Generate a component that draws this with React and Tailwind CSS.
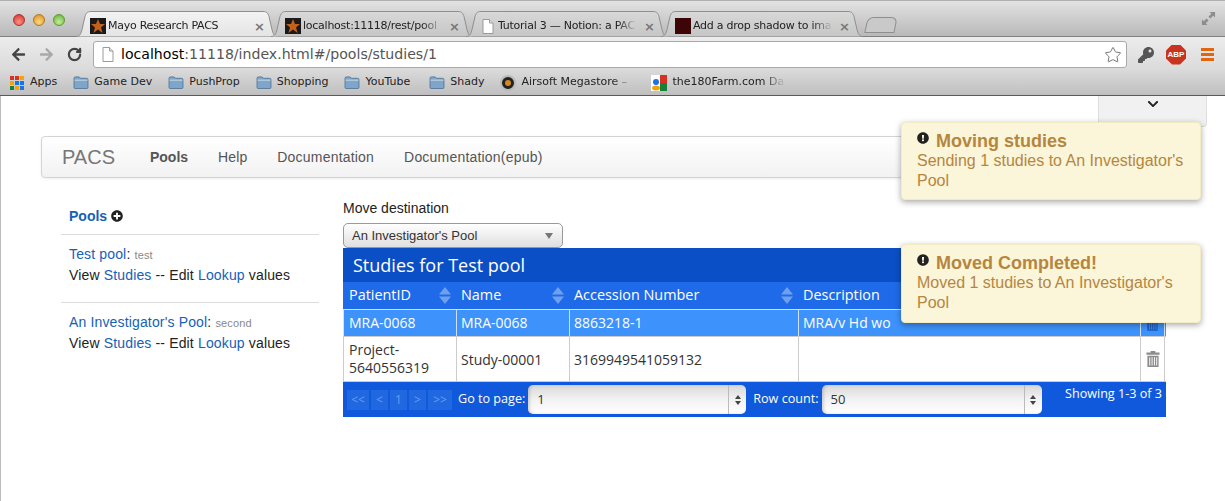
import React from 'react'
import { FaArrowLeft, FaArrowRight, FaKey, FaChevronDown, FaExclamationCircle, FaPlusCircle } from 'react-icons/fa'
import { Star, RotateCw } from 'lucide-react'

const uiFont = "font-['DejaVu_Sans',sans-serif]"

function FileIcon({ className }) {
  return (
    <svg viewBox="0 0 12 15" className={className}>
      <path d="M1 .5h6.5L11 4v10.5H1z" fill="#fff" stroke="#9a9a9a" />
      <path d="M7.5.5V4H11" fill="#e4e4e4" stroke="#9a9a9a" />
    </svg>
  )
}

function StarFavicon() {
  return (
    <svg viewBox="0 0 16 16" className="w-4 h-4 shrink-0">
      <rect width="16" height="16" fill="#1a1a1a" />
      <path d="M8 1l2 5h5l-4 3.4L12.6 15 8 11.6 3.4 15 5 9.4 1 6h5z" fill="#c4601a" />
    </svg>
  )
}

function Tab({ active, icon, title, width }) {
  return (
    <div className="relative h-[26px] -mr-[7px]" style={{ width }}>
      <svg className="absolute inset-0 w-full h-full" viewBox={`0 0 ${width} 26`} fill="none">
        <defs>
          <linearGradient id="activeTab" x1="0" y1="0" x2="0" y2="1">
            <stop offset="0" stopColor="#f3f3f3" />
            <stop offset="1" stopColor="#e4e4e4" />
          </linearGradient>
          <linearGradient id="idleTab" x1="0" y1="0" x2="0" y2="1">
            <stop offset="0" stopColor="#d8d8d8" />
            <stop offset="1" stopColor="#c6c6c6" />
          </linearGradient>
        </defs>
        <path
          d={`M0 25.5c4 0 5-3 6-7l3-13c1-3 2-5 6-5h${width - 30}c4 0 5 2 6 5l3 13c1 4 2 7 6 7`}
          fill={active ? 'url(#activeTab)' : 'url(#idleTab)'}
          stroke="#8e8e8e"
        />
      </svg>
      <div className="relative flex items-center h-full pl-[14px] pr-[13px] pt-[4px] gap-[2px]">
        {icon}
        <span className="flex-1 overflow-hidden whitespace-nowrap text-[11px] tracking-[-0.25px] text-[#222] [mask-image:linear-gradient(to_right,black_85%,transparent)]">
          {title}
        </span>
        <span className="text-[13px] text-[#777] font-bold leading-none ml-[4px]">×</span>
      </div>
    </div>
  )
}

function Folder() {
  return (
    <svg viewBox="0 0 16 14" className="w-4 h-[13px] shrink-0">
      <path d="M.5 2.5c0-1 .5-1.500 1.500-1.500h4l1.500 1.500H14c1 0 1.500.5 1.500 1.500v8.500c0 .5-.5 1-1 1h-13c-.5 0-1-.5-1-1z" fill="#7fa6c9" stroke="#56789a" />
      <path d="M1 4.500h14" stroke="#c8dcec" />
    </svg>
  )
}

function Bookmark({ label, className }) {
  return (
    <div className={`flex items-center gap-[5px] ${className || ''}`}>
      <Folder />
      <span>{label}</span>
    </div>
  )
}

function BrowserChrome() {
  return (
    <div className={`${uiFont} select-none`}>
      {/* tab strip */}
      <div className="relative h-[37px] flex items-end pl-[76px] bg-gradient-to-b from-[#e2e2e2] to-[#b9b9b9] border-t border-[#b0b0b0] border-b border-b-[#808080]">
        <div className="absolute left-[13px] top-[13px] flex gap-[8px]">
          <span className="w-3 h-3 rounded-full bg-[radial-gradient(circle_at_50%_70%,#ff8f80,#d0302c)] border border-[#a33]" />
          <span className="w-3 h-3 rounded-full bg-[radial-gradient(circle_at_50%_70%,#ffd980,#d98a1c)] border border-[#b07a20]" />
          <span className="w-3 h-3 rounded-full bg-[radial-gradient(circle_at_50%_70%,#c4ef90,#5fae3a)] border border-[#5a9a35]" />
        </div>
        <div className="flex items-end -mb-px">
          <Tab active width={202} icon={<StarFavicon />} title="Mayo Research PACS" />
          <Tab width={202} icon={<StarFavicon />} title="localhost:11118/rest/pool" />
          <Tab width={202} icon={<FileIcon className="w-4 h-[15px] shrink-0" />} title="Tutorial 3 — Notion: a PAC" />
          <Tab width={202} icon={<span className="w-4 h-4 shrink-0 bg-[#3d0505]" />} title="Add a drop shadow to ima" />
          <div className="w-[30px] h-[16px] ml-[10px] mb-[4px] rounded-t-md border border-[#8e8e8e] bg-[#c9c9c9] -skew-x-12" />
        </div>
        <svg viewBox="0 0 16 16" className="absolute right-[9px] top-[10px] w-[15px] h-[15px]" fill="#8d8d8d">
          <path d="M9 1h6v6l-2-2-3 3-2-2 3-3zM7 15H1V9l2 2 3-3 2 2-3 3z" />
        </svg>
      </div>

      {/* toolbar */}
      <div className="h-[31px] flex items-center pt-[4px] bg-gradient-to-b from-[#ececec] to-[#dcdcdc]">
        <div className="flex items-center w-[93px] pl-[11px] gap-[13px]">
          <FaArrowLeft className="w-[15px] h-[15px] text-[#444]" />
          <FaArrowRight className="w-[15px] h-[15px] text-[#a9a9a9]" />
          <RotateCw className="w-[15px] h-[15px] text-[#444]" strokeWidth={3.5} />
        </div>
        <div className="w-[1034px] h-[27px] flex items-center bg-white border border-[#aaa] rounded-[3px] pl-[8px] pr-[4px]">
          <FileIcon className="w-[12px] h-[15px] shrink-0" />
          <span className="ml-[7px] flex-1 text-[14.1px] text-[#555] whitespace-nowrap">
            <span className="text-black">localhost</span>:11118/index.html#/pools/studies/1
          </span>
          <Star className="w-[18px] h-[18px] text-[#666]" strokeWidth={1.2} />
        </div>
        <FaKey className="ml-[11px] w-[16px] h-[16px] text-[#555]" />
        <span className="ml-[12px] w-[20px] h-[20px] [clip-path:polygon(30%_0,70%_0,100%_30%,100%_70%,70%_100%,30%_100%,0_70%,0_30%)] bg-[#c8341e] text-white text-[8px] font-bold flex items-center justify-center font-['Liberation_Sans',sans-serif]">ABP</span>
        <div className="ml-[15px] w-[13px] flex flex-col gap-[2px]">
          <span className="h-[3px] bg-[#e2660f]" />
          <span className="h-[3px] bg-[#e2660f]" />
          <span className="h-[3px] bg-[#e2660f]" />
        </div>
      </div>

      {/* bookmarks */}
      <div className="h-[25px] flex items-center pl-[10px] pt-[2px] gap-[16px] text-[11px] text-[#222] whitespace-nowrap bg-gradient-to-b from-[#dcdcdc] to-[#bfbfbf] border-b border-[#5a5a5a] box-content">
        <div className="flex items-center gap-[6px]">
          <div className="grid grid-cols-3 gap-px w-[14px]">
            {['#d93025', '#d93025', '#f4a30b', '#f4a30b', '#1a73e8', '#1a73e8', '#188038', '#f4a30b', '#1a73e8'].map((c, i) => (
              <span key={i} className="w-[4px] h-[4px]" style={{ background: c }} />
            ))}
          </div>
          <span>Apps</span>
        </div>
        <Bookmark label="Game Dev" />
        <Bookmark label="PushProp" />
        <Bookmark label="Shopping" />
        <Bookmark label="YouTube" />
        <Bookmark label="Shady" className="ml-[3px]" />
        <div className="flex items-center gap-[5px]">
          <span className="w-4 h-4 rounded-full bg-[#222] border-2 border-[#bbb] flex items-center justify-center">
            <span className="w-[6px] h-[6px] rounded-full bg-[#d08a20]" />
          </span>
          <span className="w-[114px] overflow-hidden [mask-image:linear-gradient(to_right,black_80%,transparent)]">Airsoft Megastore –</span>
        </div>
        <div className="flex items-center gap-[5px]">
          <svg viewBox="0 0 16 16" className="w-4 h-4 shrink-0">
            <rect width="16" height="16" fill="#fff" />
            <path d="M9 0h7v8H9z" fill="#d93025" />
            <path d="M9 8h7v8H9z" fill="#188038" />
            <circle cx="5" cy="7" r="3" fill="#1a73e8" />
            <ellipse cx="5" cy="13" rx="4" ry="2.500" fill="#f4a30b" />
          </svg>
          <span className="w-[114px] overflow-hidden [mask-image:linear-gradient(to_right,black_80%,transparent)]">the180Farm.com Da</span>
        </div>
      </div>
    </div>
  )
}

function Navbar() {
  return (
    <div className="h-[42px] mx-[41px] flex items-center pl-[20px] rounded-[4px] border border-[#d4d4d4] bg-gradient-to-b from-white to-[#f2f2f2] shadow-[0_1px_3px_rgba(0,0,0,0.07)] text-[14px] text-[#555]">
      <span className="text-[20px] text-[#777] mr-[35px]">PACS</span>
      <span className="font-bold mr-[30px]">Pools</span>
      <span className="mr-[30px] tracking-[0.1px]">Help</span>
      <span className="mr-[30px] tracking-[0.2px]">Documentation</span>
      <span className="tracking-[0.2px]">Documentation(epub)</span>
    </div>
  )
}

function PoolItem({ name, note }) {
  return (
    <div className="border-t border-[#ddd] pl-[8px] pt-[9px] h-[68px] text-[14px] leading-[20px] text-[#222] tracking-[0.15px]">
      <div>
        <span className="text-[#1561b8]">{name}</span>: <span className="text-[11px] text-[#888]">{note}</span>
      </div>
      <div>
        View <span className="text-[#1561b8]">Studies</span> -- Edit <span className="text-[#1561b8]">Lookup</span> values
      </div>
    </div>
  )
}

function Sidebar() {
  return (
    <div className="w-[258px] shrink-0 ml-[61px]">
      <div className="flex items-center gap-[4px] h-[36px] pl-[8px] text-[14px] font-bold text-[#1561b8]">
        Pools <FaPlusCircle className="w-[12px] h-[12px] text-[#222]" />
      </div>
      <PoolItem name="Test pool" note="test" />
      <PoolItem name="An Investigator's Pool" note="second" />
    </div>
  )
}

function SortArrows() {
  return (
    <svg viewBox="0 0 12 17" className="w-[12px] h-[17px] shrink-0" fill="#6fa0ee">
      <path d="M6 0l6 7.500H0zM6 17L0 9.500h12z" />
    </svg>
  )
}

function Trash({ className }) {
  return (
    <svg viewBox="0 0 15 17" className={className} fill="currentColor">
      <path d="M5 0h5v1.500h4.500V4H.5V1.500H5z" />
      <path d="M1.500 5h12v12h-12zM3.500 6.500v9h1v-9zm2.500 0v9h1v-9zm2.500 0v9h1v-9zm2.500 0v9h1v-9z" fillRule="evenodd" />
    </svg>
  )
}

const colClass = 'grid grid-cols-[113px_113px_229px_342px_25px]'

function HeadCell({ label, className }) {
  return (
    <div className={`flex items-center justify-between pb-[1px] pr-[5px] text-[14.4px] ${className}`}>
      <span>{label}</span>
      <SortArrows />
    </div>
  )
}

function PagerButton({ label, w }) {
  return <span className={`${w} h-[20px] flex items-center justify-center bg-[#2068e0] text-[#6a9cf0] text-[12px]`}>{label}</span>
}

function FooterSelect({ value, width }) {
  return (
    <div className={`${width} h-[29px] flex items-center rounded-[5px] bg-gradient-to-b from-[#d9d9d9] via-[#f2f2f2] to-white text-[#333] text-[13px] shadow-[inset_2px_0_3px_rgba(0,0,0,0.15)]`}>
      <span className="flex-1 pl-[9px]">{value}</span>
      <span className="w-[18px] h-full border-l border-[#bbb] flex flex-col items-center justify-center gap-[2px]">
        <span className="border-x-[3px] border-x-transparent border-b-[4px] border-b-[#444]" />
        <span className="border-x-[3px] border-x-transparent border-t-[4px] border-t-[#444]" />
      </span>
    </div>
  )
}

function StudiesTable() {
  return (
    <div className="w-[823px] font-['Open_Sans',sans-serif] text-[14px]">
      <div className="h-[34px] flex items-center pl-[10px] bg-[#0b4fc6] text-white text-[18px]">Studies for Test pool</div>
      <div className={`${colClass} h-[27px] bg-[#1f6ae8] text-white`}>
        <HeadCell label="PatientID" className="pl-[6px]" />
        <HeadCell label="Name" className="pl-[5px]" />
        <HeadCell label="Accession Number" className="pl-[5px]" />
        <HeadCell label="Description" className="pl-[5px]" />
        <div />
      </div>
      <div className={`${colClass} h-[27px] bg-[#3d92fb] text-white border-t border-[#cfe2fb]`}>
        <div className="flex items-center pb-[1px] pl-[5px] border-l border-[#cfe2fb]">MRA-0068</div>
        <div className="flex items-center pb-[1px] pl-[4px] border-l border-[#cfe2fb]">MRA-0068</div>
        <div className="flex items-center pb-[1px] pl-[4px] border-l border-[#cfe2fb]">8863218-1</div>
        <div className="flex items-center pb-[1px] pl-[4px] border-l border-[#cfe2fb]">MRA/v Hd wo</div>
        <div className="flex items-center justify-center border-l border-r border-[#cfe2fb]">
          <Trash className="w-[13px] h-[15px] text-[#1c5cc0]" />
        </div>
      </div>
      <div className={`${colClass} h-[46px] text-[#333] leading-[18px] border-y border-[#ccc]`}>
        <div className="flex items-center pl-[5px] border-l border-[#ccc]">Project-<br />5640556319</div>
        <div className="flex items-center pl-[4px] pt-[1px] border-l border-[#ccc]">Study-00001</div>
        <div className="flex items-center pl-[4px] pt-[1px] border-l border-[#ccc]">3169949541059132</div>
        <div className="border-l border-[#ccc]" />
        <div className="flex items-center justify-center border-l border-r border-[#ccc]">
          <Trash className="w-[14px] h-[16px] text-[#8c8c8c]" />
        </div>
      </div>
      <div className="h-[35px] flex items-center pl-[4px] bg-[#1059dc] text-white text-[12.6px]">
        <div className="flex gap-[2px] mr-[6px]">
          <PagerButton label="<<" w="w-[22px]" />
          <PagerButton label="<" w="w-[17px]" />
          <PagerButton label="1" w="w-[17px]" />
          <PagerButton label=">" w="w-[17px]" />
          <PagerButton label=">>" w="w-[24px]" />
        </div>
        <span className="mr-[3px]">Go to page:</span>
        <FooterSelect value="1" width="w-[218px]" />
        <span className="ml-[7px] mr-[3px]">Row count:</span>
        <FooterSelect value="50" width="w-[220px]" />
        <span className="ml-auto mr-[4px] self-start mt-[3px]">Showing 1-3 of 3</span>
      </div>
    </div>
  )
}

function Toast({ title, text, className }) {
  return (
    <div className={`absolute left-[901px] w-[300px] rounded-[4px] bg-[#fbf5d9] border border-[#f3ebc4] shadow-[0_2px_6px_rgba(0,0,0,0.35)] pl-[15px] pr-[15px] pt-[8px] text-[#b5863f] text-[16px] leading-[20px] ${className}`}>
      <div className="flex items-center gap-[7px] text-[18px] font-bold leading-[20px]">
        <FaExclamationCircle className="w-[12px] h-[12px] text-[#222] -mt-[6px]" />
        {title}
      </div>
      <div>{text}</div>
    </div>
  )
}

export default function App() {
  return (
    <div className="relative h-[501px] w-[1225px] overflow-hidden bg-white font-['Liberation_Sans',sans-serif] shadow-[inset_1px_0_0_#bbb]">
      <BrowserChrome />
      <div className="relative">
        <div className="absolute left-[1098px] top-0 w-[109px] h-[31px] bg-[#f1f1f1] border border-t-0 border-[#ddd] rounded-b-[4px] flex justify-center pt-[2px]">
          <FaChevronDown className="w-[12px] h-[12px] text-[#222]" />
        </div>
        <div className="pt-[40px]">
          <Navbar />
          <div className="flex mt-[20px]">
            <Sidebar />
            <div className="ml-[24px]">
              <div className="text-[14px] text-[#222] leading-[20px] mb-[5px]">Move destination</div>
              <div className="w-[220px] h-[25px] flex items-center justify-between pl-[8px] pr-[9px] rounded-[5px] border border-[#999] bg-gradient-to-b from-white to-[#dfdfdf] text-[13px] text-[#333]">
                An Investigator's Pool
                <span className="border-x-[4px] border-x-transparent border-t-[6px] border-t-[#777]" />
              </div>
              <StudiesTable />
            </div>
          </div>
        </div>
        <Toast className="top-[26px] h-[78px]" title="Moving studies" text="Sending 1 studies to An Investigator's Pool" />
        <Toast className="top-[148px] h-[79px]" title="Moved Completed!" text="Moved 1 studies to An Investigator's Pool" />
      </div>
    </div>
  )
}
